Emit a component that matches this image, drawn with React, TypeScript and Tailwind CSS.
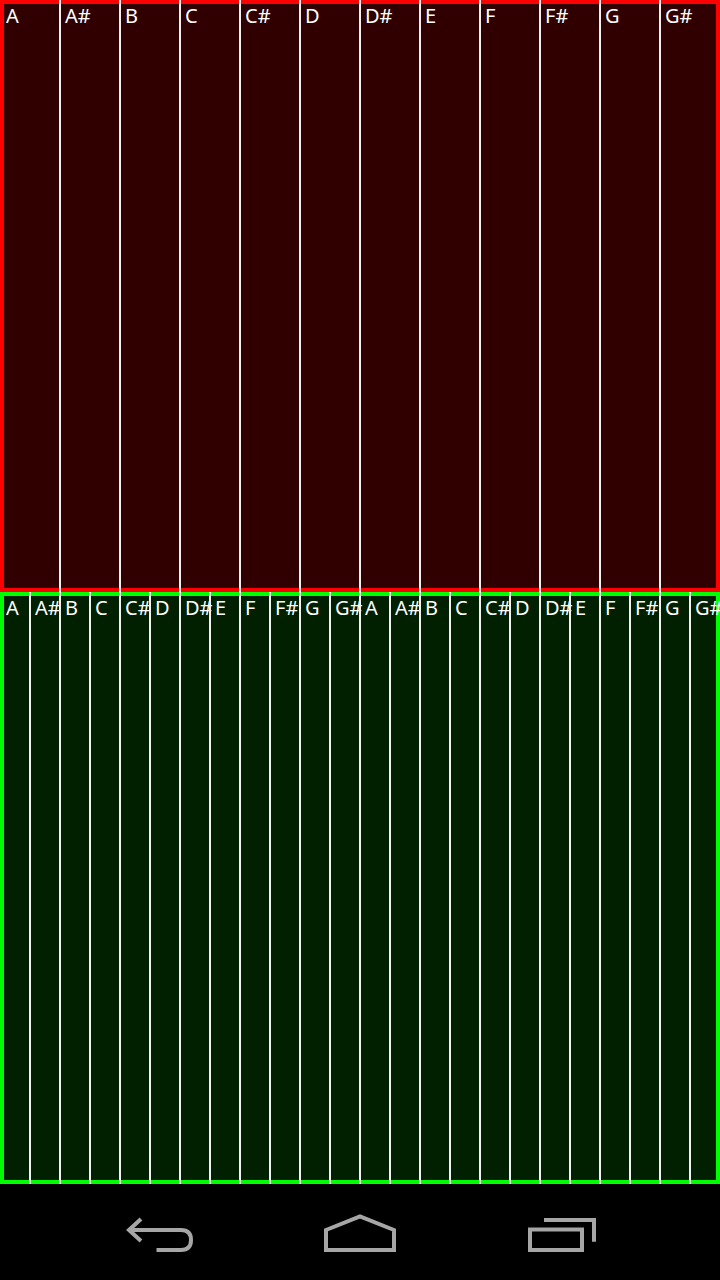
/** 두 줄 음계 건반 + 하단 내비게이션 바 */
const NOTES = ["A", "A#", "B", "C", "C#", "D", "D#", "E", "F", "F#", "G", "G#"];

function NoteRow({ notes, wide, panel }: { notes: string[]; wide: boolean; panel: string }) {
  return (
    <div className={`flex h-[592px] ${panel}`}>
      {notes.map((note, idx) => (
        <div
          key={idx}
          className={`shrink-0 border-[#f2f2f2] pt-[2px] text-[20px] leading-[28px] text-white first:border-l-0 first:pl-[6px] border-l-2 pl-[4px] ${
            wide ? "w-[60px] first:w-[59px]" : "w-[30px] first:w-[29px]"
          }`}
        >
          {note}
        </div>
      ))}
    </div>
  );
}

export default function App() {
  return (
    <div className="flex h-[1280px] w-[720px] flex-col overflow-hidden bg-black font-['Noto_Sans',sans-serif]">
      <NoteRow
        notes={NOTES}
        wide
        panel="bg-[#300000] shadow-[inset_0_0_0_4px_#ff0000]"
      />
      <NoteRow
        notes={[...NOTES, ...NOTES]}
        wide={false}
        panel="bg-[#002000] shadow-[inset_0_0_0_4px_#00ff00]"
      />
      <div className="flex h-[96px] items-start pt-[30px] pl-[124px]">
        <svg width="72" height="40" viewBox="0 0 72 40" fill="none" stroke="#a6a6a6" strokeWidth="4">
          <path d="M17 5 L5 16 L17 27" />
          <path d="M5 16 H57 Q67 16 67 26 Q67 36 57 36 H32.5" />
        </svg>
        <svg className="ml-[126px] -mt-[2px]" width="76" height="44" viewBox="0 0 76 44" fill="none" stroke="#a6a6a6" strokeWidth="4">
          <path d="M4 38 V18 L38 4.5 L72 18 V38 Z" />
        </svg>
        <svg className="ml-[126px] mt-[2px]" width="72" height="40" viewBox="0 0 72 40" fill="none" stroke="#a6a6a6" strokeWidth="4">
          <rect x="6" y="13.5" width="52" height="20.5" />
          <path d="M20 4 H72 M70 2 V25.7" />
        </svg>
      </div>
    </div>
  );
}
